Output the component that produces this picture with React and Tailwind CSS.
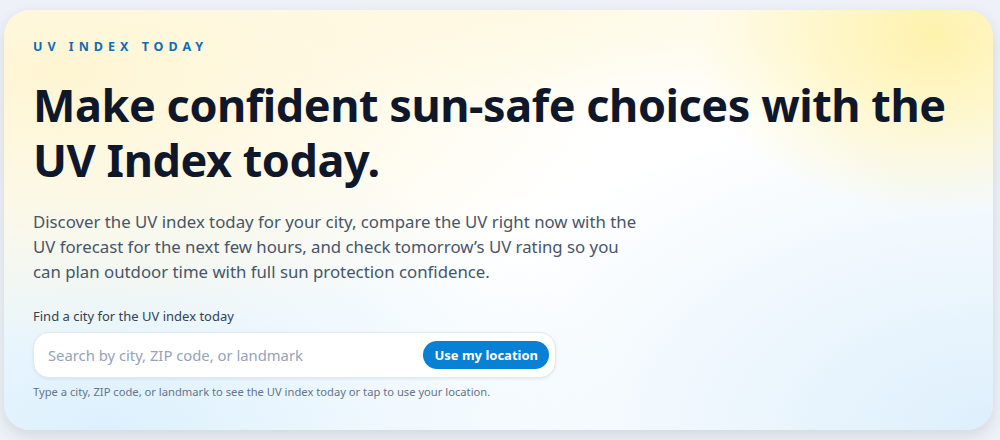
export default function App() {
  return (
    <div className="w-[1000px] h-[440px] bg-[#eef2f8] pl-[4px] pr-[7px] pt-[10px] pb-[10px] font-['Noto_Sans','Open_Sans',sans-serif]">
      <div className="h-full rounded-[26px] shadow-[0_6px_16px_rgba(15,23,42,0.12)] overflow-hidden bg-[radial-gradient(ellipse_240px_180px_at_94%_6%,#fef2ad_0%,rgba(254,242,173,0.6)_45%,rgba(254,242,173,0)_100%),radial-gradient(ellipse_560px_280px_at_6%_15%,#fef5d2_0%,rgba(254,245,210,0)_100%),radial-gradient(ellipse_500px_120px_at_55%_0%,rgba(254,249,225,0.9)_0%,rgba(254,249,225,0)_100%),radial-gradient(ellipse_520px_300px_at_10%_100%,#dcf0fd_0%,rgba(220,240,253,0)_100%),radial-gradient(ellipse_560px_340px_at_100%_100%,#ddeffc_0%,rgba(221,239,252,0)_100%),linear-gradient(#ffffff,#ffffff)] px-[29px] pt-[29px]">
        <div className="text-[12.5px] font-bold tracking-[0.4em] text-[#0a6fb8] leading-[16px] whitespace-nowrap">UV INDEX TODAY</div>
        <h1 className="mt-[22px] text-[45px] font-bold leading-[55px] text-[#0f172a] tracking-[-0.01em] whitespace-nowrap">
          Make confident sun-safe choices with the<br />UV Index today.
        </h1>
        <p className="mt-[22px] text-[16.8px] leading-[25px] text-[#475569] whitespace-nowrap">
          Discover the UV index today for your city, compare the UV right now with the<br />UV forecast for the next few hours, and check tomorrow’s UV rating so you<br />can plan outdoor time with full sun protection confidence.
        </p>
        <div className="mt-[23px] text-[13px] leading-[18px] text-[#334155] whitespace-nowrap">Find a city for the UV index today</div>
        <div className="mt-[7px] w-[523px] h-[46px] rounded-[16px] bg-white border border-[#e2e8f0] shadow-[0_1px_3px_rgba(15,23,42,0.08)] flex items-center pl-[14px] pr-[6px]">
          <span className="flex-1 text-[14.8px] text-[#94a3b8] whitespace-nowrap">Search by city, ZIP code, or landmark</span>
          <button className="h-[28px] px-[11px] rounded-full bg-[#0880d4] text-white text-[13px] font-bold leading-none whitespace-nowrap">Use my location</button>
        </div>
        <div className="mt-[6px] text-[11.2px] leading-[16px] text-[#64748b] whitespace-nowrap">Type a city, ZIP code, or landmark to see the UV index today or tap to use your location.</div>
      </div>
    </div>
  );
}
